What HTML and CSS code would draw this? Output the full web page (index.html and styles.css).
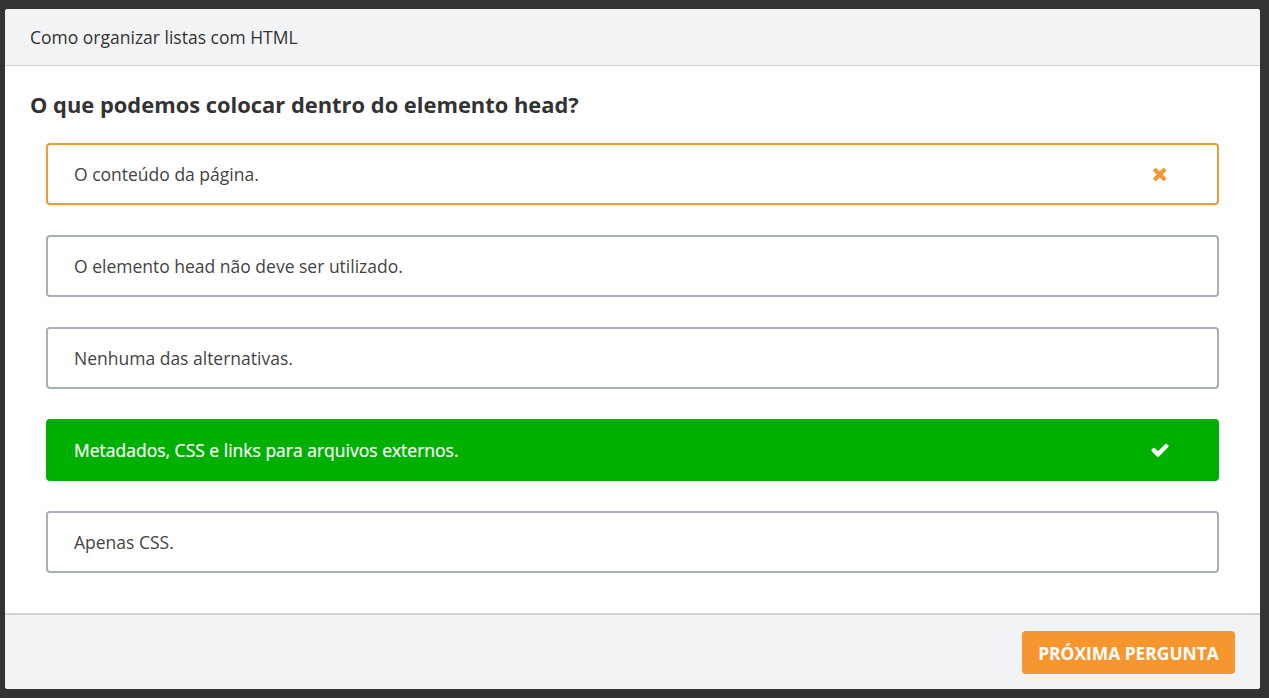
FILE: index.html
```html
<!DOCTYPE html>
<html lang="pt-BR">
<head>
<meta charset="utf-8">
<title>Quiz</title>
<link rel="stylesheet" href="styles.css">
</head>
<body>
<div class="card">
  <header class="card-header">Como organizar listas com HTML</header>
  <main class="card-body">
    <h2 class="question">O que podemos colocar dentro do elemento head?</h2>
    <ul class="options">
      <li class="option wrong">
        <span>O conteúdo da página.</span>
        <span class="icon-wrap"><svg class="icon" width="15.4" height="19.7" viewBox="0 0 1408 1792"><path fill="currentColor" d="M1298 1322q0 40-28 68l-136 136q-28 28-68 28t-68-28l-294-294-294 294q-28 28-68 28t-68-28l-136-136q-28-28-28-68t28-68l294-294-294-294q-28-28-28-68t28-68l136-136q28-28 68-28t68 28l294 294 294-294q28-28 68-28t68 28l136 136q28 28 28 68t-28 68l-294 294 294 294q28 28 28 68z"/></svg></span>
      </li>
      <li class="option"><span>O elemento head não deve ser utilizado.</span></li>
      <li class="option"><span>Nenhuma das alternativas.</span></li>
      <li class="option right">
        <span>Metadados, CSS e links para arquivos externos.</span>
        <span class="icon-wrap"><svg class="icon" width="20" height="20" viewBox="0 0 1792 1792"><path fill="currentColor" d="M1671 566q0 40-28 68l-724 724-136 136q-28 28-68 28t-68-28l-136-136-362-362q-28-28-28-68t28-68l136-136q28-28 68-28t68 28l294 295 656-657q28-28 68-28t68 28l136 136q28 28 28 68z"/></svg></span>
      </li>
      <li class="option"><span>Apenas CSS.</span></li>
    </ul>
  </main>
  <footer class="card-footer">
    <button class="next">PRÓXIMA PERGUNTA</button>
  </footer>
</div>
</body>
</html>
```
FILE: styles.css
```css
html, body {
  margin: 0;
  padding: 0;
  height: 100%;
}
body {
  background: #333333;
  font-family: "Open Sans", "Noto Sans", sans-serif;
  padding: 9px 9px 0 5px;
  box-sizing: border-box;
}
.card {
  background: #ffffff;
  border-radius: 3px;
  overflow: hidden;
  width: 1255px;
  height: 680px;
  display: flex;
  flex-direction: column;
}
.card-header {
  background: #f2f3f5;
  height: 57px;
  box-sizing: border-box;
  border-bottom: 1px solid #cfd1d4;
  padding: 0 25px;
  display: flex;
  align-items: center;
  font-size: 17.5px;
  color: #333333;
}
.card-body {
  flex: 1;
  padding: 0 25px;
}
.question {
  margin: 24px 0 23px;
  font-size: 21.9px;
  font-weight: 700;
  color: #333333;
  line-height: 30px;
}
.options {
  list-style: none;
  margin: 0;
  padding: 0 16px;
  display: flex;
  flex-direction: column;
  gap: 30px;
}
.option {
  height: 62px;
  box-sizing: border-box;
  border: 2px solid #a7afb8;
  border-radius: 4px;
  padding: 0 45px 0 26px;
  display: flex;
  align-items: center;
  justify-content: space-between;
  font-size: 17.5px;
  color: #444444;
}
.icon-wrap {
  width: 24px;
  display: flex;
  justify-content: center;
  align-items: center;
}
.option.wrong {
  border-color: #f39a33;
}
.option.wrong .icon {
  color: #f7952f;
}
.option.right {
  background: #00b000;
  border-color: #00b000;
  color: #ffffff;
  font-weight: 400;
  -webkit-text-stroke: 0.2px #ffffff;
}
.option.right .icon {
  color: #ffffff;
}
.card-footer {
  background: #f2f3f5;
  border-top: 2px solid #cfd1d4;
  height: 76px;
  box-sizing: border-box;
  padding: 0 25px;
  display: flex;
  align-items: center;
  justify-content: flex-end;
}
.next {
  background: #f7962f;
  color: #ffffff;
  border: none;
  border-radius: 4px;
  width: 213px;
  height: 43px;
  font-family: "Open Sans", "Noto Sans", sans-serif;
  font-weight: 700;
  font-size: 17.4px;
  padding: 0;
  margin-top: 1px;
}
```
